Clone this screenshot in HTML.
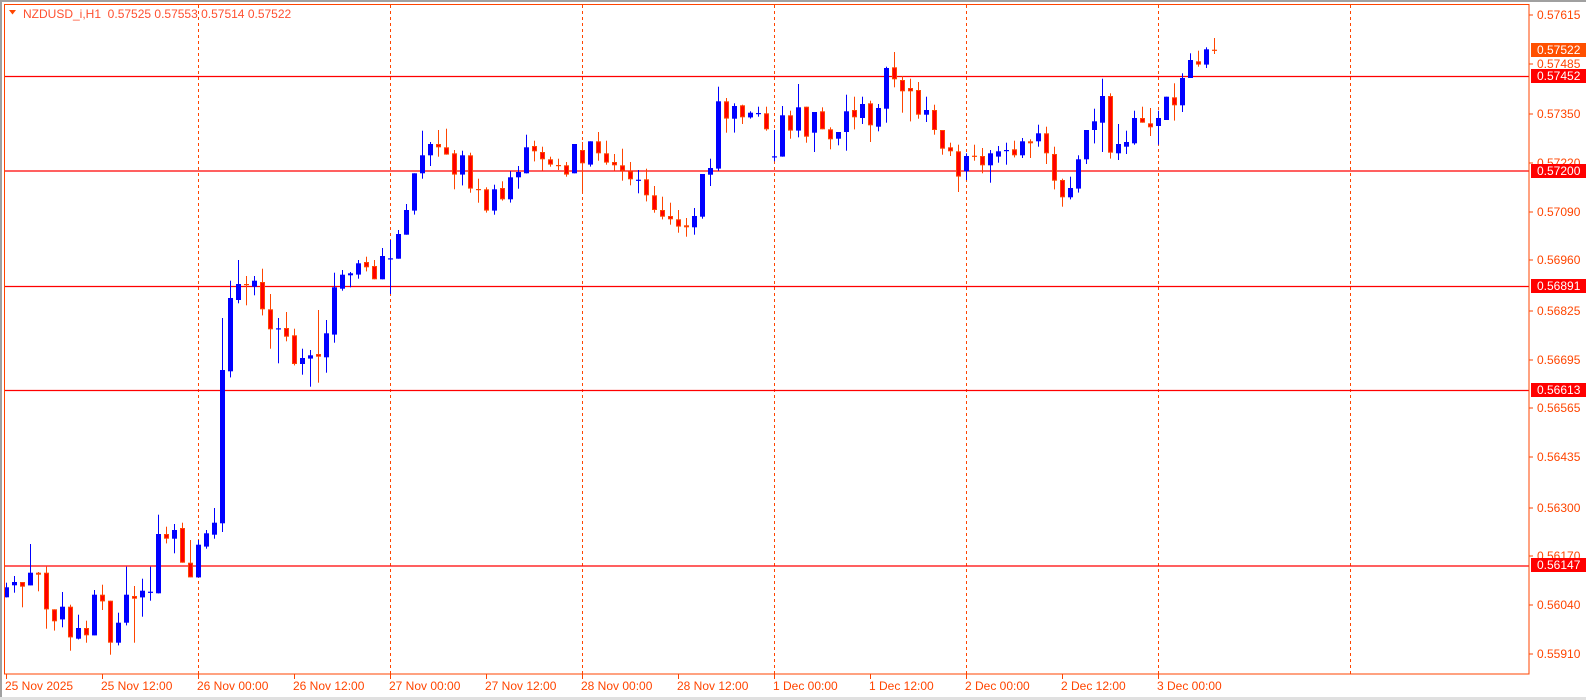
<!DOCTYPE html>
<html><head><meta charset="utf-8"><style>
html,body{margin:0;padding:0;background:#fff;width:1586px;height:700px;overflow:hidden}
svg{display:block}
text{font-family:"Liberation Sans",sans-serif;font-size:12px}
</style></head><body>
<svg id="c" width="1586" height="700" xmlns="http://www.w3.org/2000/svg">
<rect x="0" y="0" width="1586" height="700" fill="#fff"/>
<rect x="0" y="0" width="1586" height="2" fill="#a0a0a0"/>
<rect x="0" y="0" width="2" height="700" fill="#a0a0a0"/>
<rect x="0" y="697" width="1586" height="3" fill="#e0e0e0"/>
<g id="grid" stroke="#ff4500" stroke-width="1" stroke-dasharray="3,3">
<line x1="198.5" y1="5" x2="198.5" y2="674"/>
<line x1="390.5" y1="5" x2="390.5" y2="674"/>
<line x1="582.5" y1="5" x2="582.5" y2="674"/>
<line x1="774.5" y1="5" x2="774.5" y2="674"/>
<line x1="966.5" y1="5" x2="966.5" y2="674"/>
<line x1="1158.5" y1="5" x2="1158.5" y2="674"/>
<line x1="1350.5" y1="5" x2="1350.5" y2="674"/>
</g>
<g stroke="#ff0000" stroke-width="1.2">
<line x1="5" y1="76.5" x2="1529" y2="76.5"/>
<line x1="5" y1="171" x2="1529" y2="171"/>
<line x1="5" y1="286.5" x2="1529" y2="286.5"/>
<line x1="5" y1="390.5" x2="1529" y2="390.5"/>
<line x1="5" y1="566" x2="1529" y2="566"/>
</g>
<g id="candles"></g>
<rect x="4.5" y="4.5" width="1524.5" height="669.5" fill="none" stroke="#ff4500" stroke-width="1"/>
<polygon points="9,10 16,10 12.5,14.5" fill="#ff4500"/>
<text x="23" y="18" fill="#ff5030" font-size="12">NZDUSD_i,H1&#160; 0.57525 0.57553 0.57514 0.57522</text>
<g fill="#ff4500" id="yax">
<text x="1537" y="19">0.57615</text>
<text x="1537" y="68">0.57485</text>
<text x="1537" y="118">0.57350</text>
<text x="1537" y="167">0.57220</text>
<text x="1537" y="216">0.57090</text>
<text x="1537" y="264">0.56960</text>
<text x="1537" y="315">0.56825</text>
<text x="1537" y="364">0.56695</text>
<text x="1537" y="412">0.56565</text>
<text x="1537" y="461">0.56435</text>
<text x="1537" y="512">0.56300</text>
<text x="1537" y="560">0.56170</text>
<text x="1537" y="609">0.56040</text>
<text x="1537" y="658">0.55910</text>
</g>
<g stroke="#ff4500">
<line x1="1529" y1="15" x2="1533" y2="15"/><line x1="1529" y1="64" x2="1533" y2="64"/>
<line x1="1529" y1="114" x2="1533" y2="114"/><line x1="1529" y1="163" x2="1533" y2="163"/>
<line x1="1529" y1="212" x2="1533" y2="212"/><line x1="1529" y1="260" x2="1533" y2="260"/>
<line x1="1529" y1="311" x2="1533" y2="311"/><line x1="1529" y1="360" x2="1533" y2="360"/>
<line x1="1529" y1="408" x2="1533" y2="408"/><line x1="1529" y1="457" x2="1533" y2="457"/>
<line x1="1529" y1="508" x2="1533" y2="508"/><line x1="1529" y1="556" x2="1533" y2="556"/>
<line x1="1529" y1="605" x2="1533" y2="605"/><line x1="1529" y1="654" x2="1533" y2="654"/>
</g>
<rect x="1531" y="43" width="55" height="14" fill="#ff5000"/><text x="1537" y="54" fill="#fff">0.57522</text>
<rect x="1531" y="69" width="55" height="14" fill="#ff0000"/><text x="1537" y="80" fill="#fff">0.57452</text>
<rect x="1531" y="164" width="55" height="14" fill="#ff0000"/><text x="1537" y="175" fill="#fff">0.57200</text>
<rect x="1531" y="279" width="55" height="14" fill="#ff0000"/><text x="1537" y="290" fill="#fff">0.56891</text>
<rect x="1531" y="383" width="55" height="14" fill="#ff0000"/><text x="1537" y="394" fill="#fff">0.56613</text>
<rect x="1531" y="558" width="55" height="14" fill="#ff0000"/><text x="1537" y="569" fill="#fff">0.56147</text>
<g fill="#ff4500">
<text x="5" y="690">25 Nov 2025</text>
<text x="101" y="690">25 Nov 12:00</text>
<text x="197" y="690">26 Nov 00:00</text>
<text x="293" y="690">26 Nov 12:00</text>
<text x="389" y="690">27 Nov 00:00</text>
<text x="485" y="690">27 Nov 12:00</text>
<text x="581" y="690">28 Nov 00:00</text>
<text x="677" y="690">28 Nov 12:00</text>
<text x="773" y="690">1 Dec 00:00</text>
<text x="869" y="690">1 Dec 12:00</text>
<text x="965" y="690">2 Dec 00:00</text>
<text x="1061" y="690">2 Dec 12:00</text>
<text x="1157" y="690">3 Dec 00:00</text>
</g>
<g stroke="#ff4500" id="xt"></g>
</svg>
<script>
var A=[[1042,1072,1028,1072,0],[1026,1036,1008,1058,0],[1026,1040,1026,1102,1],[998,1036,912,1036,0],[998,1004,996,1054,1],[998,1108,980,1166,1],[1108,1144,1108,1172,1],[1100,1138,1056,1162,0],[1100,1192,1094,1232,1],[1164,1196,1124,1198,0],[1164,1186,1142,1208,1],[1064,1186,1050,1186,0],[1064,1084,1034,1110,1],[1082,1208,1082,1244,1],[1148,1208,1118,1216,0],[1064,1148,980,1156,0],[1068,1076,1038,1208,1],[1052,1072,1016,1130,0],[1055,1057,980,1082,0],[882,1060,824,1060,0],[882,896,860,910,1],[870,896,852,940,0],[864,968,848,968,1],[968,1012,900,1012,1],[914,1012,900,1012,0],[880,920,870,926,0],[848,884,804,896,0],[390,850,234,876,0],[174,394,122,412,0],[132,180,60,190,0],[132,136,108,196,1],[122,140,108,166,0],[126,208,86,226,1],[208,268,162,326,1],[265,267,234,370,0],[264,290,216,304,1],[286,372,266,376,1],[354,372,326,404,0],[346,356,330,440,0],[342,350,210,428,1],[280,352,240,398,0],[142,284,98,308,0],[104,146,90,152,0],[100,106,96,142,0],[70,104,60,116,0],[66,82,50,94,1],[78,118,60,118,1],[48,118,24,118,0],[55,57,0,162,0]];
var B=[[492,566,480,566,0],[420,494,402,494,0],[310,422,310,434,0],[256,310,182,326,0],[222,256,216,288,0],[222,232,180,260,1],[232,254,176,254,1],[250,314,240,358,1],[256,314,242,346,0],[256,356,248,368,1],[357,359,326,398,1],[358,422,352,428,1],[358,422,344,434,0],[354,388,334,392,1],[322,388,304,398,0],[306,322,288,356,0],[232,310,194,310,0],[228,244,212,274,1],[246,268,230,302,1],[268,284,260,290,1],[285,287,266,300,1],[286,314,276,320,1],[222,310,222,310,0],[240,280,216,370,1],[214,284,214,290,0],[214,250,186,272,1],[250,278,212,284,1],[276,286,252,302,1],[286,302,236,332,1],[304,328,276,346,1],[329,331,300,370,0],[328,376,296,394,1],[376,420,348,428,1],[420,440,380,448,1],[438,448,398,464,1],[448,470,420,488,1],[466,472,444,500,1],[438,472,414,494,0],[312,440,312,446,0],[294,314,266,348,0],[94,296,50,302,0],[94,146,84,188,1],[108,146,100,188,0],[106,142,104,162,1],[128,142,124,146,0],[129,131,110,140,0],[130,178,110,182,1]];
var C=[[379,381,300,394,0],[256,380,228,380,0],[256,302,242,326,1],[232,302,162,322,0],[230,320,230,338,1],[246,308,246,366,0],[244,298,232,298,1],[298,328,292,358,1],[306,326,306,346,0],[244,306,194,362,0],[240,262,200,298,1],[222,264,200,282,0],[220,286,212,336,1],[234,290,222,304,0],[114,236,110,278,0],[112,148,66,172,1],[150,184,138,248,1],[174,184,146,274,1],[180,254,156,266,1],[240,254,200,276,0],[240,300,224,314,1],[300,356,300,374,1],[352,364,338,378,1],[364,440,344,486,1],[378,424,370,450,0],[377,379,344,392,1],[378,406,354,430,1],[370,406,360,458,0],[364,380,348,398,0],[360,364,338,404,0],[358,376,332,382,1],[334,376,324,384,0],[334,340,328,384,1],[310,334,284,350,0],[310,370,290,402,1],[372,452,350,478,1],[450,502,446,530,1],[474,502,440,508,0],[388,476,376,488,0],[300,388,300,402,0],[274,300,236,340,0],[198,278,146,366,0],[198,368,190,386,1],[342,370,282,390,0],[336,350,302,372,0],[264,340,242,344,0],[264,278,230,278,1],[280,292,234,318,1],[264,288,242,344,0],[200,270,200,270,0],[202,226,160,272,1],[144,226,130,246,0],[90,144,70,144,0],[94,104,62,110,1],[58,104,52,114,0],[59,61,24,72,1]];
var s='',i=0;
function add(arr,off){arr.forEach(function(d){var cx=6+8*i;var t=off+d[0]/3,b=off+d[1]/3,h=off+d[2]/3,l=off+d[3]/3;var col=d[4]?'#ff4500':'#0000ff';
s+='<rect x="'+cx+'" y="'+h.toFixed(1)+'" width="1" height="'+(l-h).toFixed(1)+'" fill="'+col+'"/>';
var bh=b-t;if(bh<1.5){s+='<rect x="'+(cx-2)+'" y="'+(t).toFixed(1)+'" width="5" height="1.2" fill="'+col+'"/>';}
else if(d[4]){s+='<rect x="'+(cx-2)+'" y="'+t.toFixed(1)+'" width="5" height="'+bh.toFixed(1)+'" fill="#ff4500"/><rect x="'+(cx-1)+'" y="'+(t+1).toFixed(1)+'" width="3" height="'+Math.max(0,bh-2).toFixed(1)+'" fill="#ff0000"/>';}
else{s+='<rect x="'+(cx-2)+'" y="'+t.toFixed(1)+'" width="5" height="'+bh.toFixed(1)+'" fill="#0000ff"/>';}
i++;});}
add(A,240);add(B,70);add(C,30);
document.getElementById('candles').innerHTML=s;
var t='';for(var k=0;k<13;k++){var x=6.5+96*k;t+='<line x1="'+x+'" y1="674" x2="'+x+'" y2="679"/>';}
document.getElementById('xt').innerHTML=t;
</script>
</body></html>
